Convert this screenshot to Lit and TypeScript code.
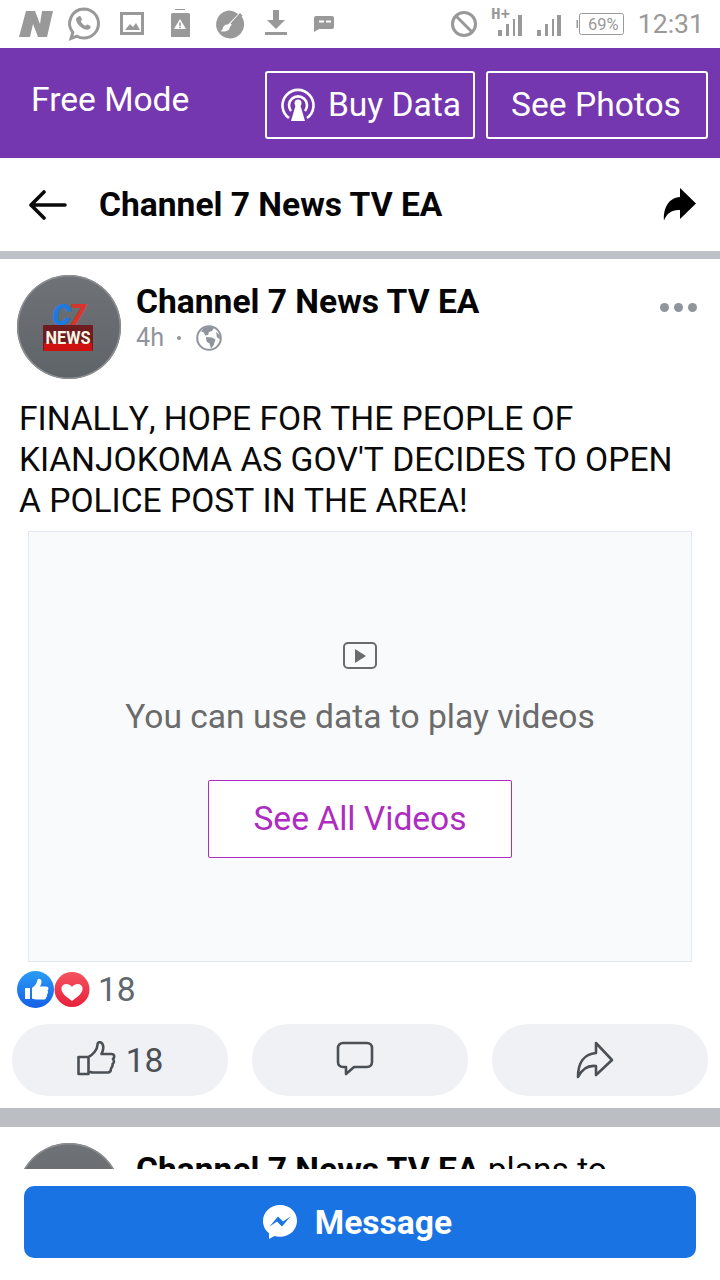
import { LitElement, html, css, svg } from "lit";
import { customElement } from "lit/decorators.js";

const G = "#999";

@customElement("app-root")
export class AppRoot extends LitElement {
  static styles = css`
    :host { display: flex; flex-direction: column; width: 720px; height: 1280px; overflow: hidden; background: #fff; font-family: Roboto, "Liberation Sans", sans-serif; color: #000; }
    svg { display: block; flex: none; }
    .status { height: 48px; flex: none; display: flex; align-items: flex-start; position: relative; }
    .clock { font-size: 26.6px; color: #999; line-height: 48px; margin-right: 16px; }
    .spacer { flex: 1; }
    .promo { height: 110px; flex: none; background: #7537b0; display: flex; align-items: center; padding: 0 12px 0 31px; color: #fff; }
    .free { font-size: 33.6px; flex: 1; margin-top: -8px; }
    .pbtn { height: 68px; box-sizing: border-box; border: 2px solid #fff; border-radius: 3px; display: flex; align-items: center; justify-content: center; font-size: 33.6px; margin-left: 11px; margin-top: 4px; padding-bottom: 2px; }
    .buy { width: 210px; gap: 13px; padding-left: 2px; }
    .buy svg { margin-top: 2px; }
    .photos { width: 222px; padding-right: 2px; }
    .head { height: 93px; flex: none; display: flex; align-items: center; padding: 0 24px 0 29px; box-sizing: border-box; }
    .head h1 { margin: 0 0 0 32px; font-size: 33.6px; font-weight: 700; flex: 1; color: #050505; }
    .rule { height: 8px; flex: none; background: #bec2c8; }
    .feed { height: 910px; flex: none; overflow: hidden; }
    .phead { display: flex; padding: 16px 23px 0 17px; height: 104px; }
    .avatar { width: 104px; height: 104px; flex: none; border-radius: 50%; background: linear-gradient(#6f7276, #5f6469); box-shadow: inset 0 0 0 1.5px #8d8f91; overflow: hidden; }
    .meta { margin-left: 15px; flex: 1; }
    .name { font-size: 33.6px; font-weight: 700; line-height: 38px; margin-top: 8px; margin-bottom: -1px; color: #050505; white-space: nowrap; }
    .name span { font-weight: 400; }
    .sub { display: flex; align-items: center; color: #90949c; font-size: 25.2px; line-height: 36px; }
    .sub i { width: 4px; height: 4px; border-radius: 50%; background: #90949c; margin: 0 15px 0 13px; }
    .more { display: flex; gap: 5px; margin-top: 28px; height: 9px; }
    .more i { width: 9px; height: 9px; border-radius: 50%; background: #90949c; }
    .text { margin: 19px 19px 0 19px; font-size: 33.6px; line-height: 41px; color: #0a0a0a; font-kerning: none; }
    .video { margin: 10px 28px 0; height: 431px; box-sizing: border-box; border: 1px solid #e3e8ee; background: #f9fafc; display: flex; flex-direction: column; align-items: center; padding-top: 110px; }
    .video p { margin: 24px 0 0; font-size: 33.6px; line-height: 46px; color: #6b6b6b; }
    .seeall { margin-top: 40px; width: 304px; height: 78px; box-sizing: border-box; border: 1px solid #b02cc0; border-radius: 2px; background: #fff; color: #ae2cc0; font-size: 33.6px; padding-bottom: 2px; display: flex; align-items: center; justify-content: center; }
    .react { display: flex; align-items: center; height: 38px; margin: 9px 0 0 17px; color: #606770; font-size: 33.6px; }
    .react span { margin-left: 8px; padding-bottom: 2px; }
    .actions { display: flex; gap: 24px; padding: 15px 12px 0; }
    .act { flex: 1; height: 72px; border-radius: 36px; background: #f0f1f5; display: flex; align-items: center; justify-content: center; gap: 9px; color: #4b4f56; font-size: 33.6px; }
    .shift { margin-right: 10px; }
    .rule2 { height: 19px; margin-top: 12px; background: #bbbec2; }
    .post2 { padding-top: 16px; }
    .bar { flex: 1; padding: 17px 24px 0; background: #fff; }
    .msg { height: 72px; border-radius: 10px; background: #1a73e3; color: #fff; font-size: 33.6px; font-weight: 700; display: flex; align-items: center; justify-content: center; gap: 17px; padding-right: 6px; }
  `;

  private statusIcons() {
    return html`<div class="status">
      <svg width="720" height="48" viewBox="0 0 720 48" style="position:absolute;left:0;top:0">
        <path fill="${G}" d="M26 11h9l5 13 2-13h11l-6 26h-9l-5-13-3 13H19z"/>
        <path fill="none" stroke="${G}" stroke-width="3" d="M84 9a14.500 14.500 0 0 1 0 29c-2.700 0-5-.6-7-1.800l-6 2.300 1.800-6A14.500 14.500 0 0 1 84 9z"/>
        <path fill="${G}" d="M78 17c1-1.500 2.500-1.500 3 0l1 2.500-1.200 2c1 2 2.500 3.300 4.500 4.300l2-1.300 2.700 1.300c1 .8.800 2.200-.3 3-2 1.600-5 1-8.300-1.300-3.500-2.500-5.500-5.700-5.400-8.500 0-.8.600-1.400 2-2z"/>
        <rect x="121.500" y="13.500" width="21" height="20" fill="none" stroke="${G}" stroke-width="3"/>
        <path fill="${G}" d="M125 30l5-6 3 3 3-4 4 7z"/>
        <path fill="${G}" fill-rule="evenodd" d="M175 9h10v1h-10zM173 13h14a3 3 0 0 1 3 1v23h-19V14a3 3 0 0 1 2-1zM180 19l-6 10h12zM179.200 22.500h1.600v3.500h-1.600zM179.200 26.700h1.600v1.500h-1.600z"/>
        <path fill="${G}" d="M228.500 10.500a14 14 0 0 1 9.500 3.700l-10 10.300c-2.500-.5-4.500 1-5 3.500-.3 1.500-1.300 2.500-2.500 3 2.500 1 6.500.8 8.500-1.500l1.500-3.500 10.800-10a14 14 0 1 1-12.800-5.500z"/>
        <path fill="${G}" d="M240 13l2.500 2.500-9.500 10.500-2.500-2.500z"/>
        <path fill="${G}" d="M273 10h6v10h6l-9 9-9-9h6zM265 32h22v3h-22z"/>
        <path fill="${G}" fill-rule="evenodd" d="M316 16h16a2 2 0 0 1 2 2v9a2 2 0 0 1-2 2h-13l-5 3V18a2 2 0 0 1 2-2zM319 20.500v2h5v-2zM326 20.500v2h5v-2z"/>
        <circle cx="464" cy="24" r="11.500" fill="none" stroke="${G}" stroke-width="3"/>
        <path stroke="${G}" stroke-width="3" d="M456 16l16 16"/>
        <text x="491" y="19" font-family="Liberation Mono, monospace" font-size="16" font-weight="700" fill="${G}">H+</text>
        <path fill="${G}" d="M498 30h4v6h-4zM506 24h3v12h-3zM513 19h2v17h-2zM518 15h4v21h-4z"/>
        <path fill="${G}" d="M537 30h4v6h-4zM545 24h3v12h-3zM552 19h2v17h-2zM557 15h4v21h-4z"/>
        <rect x="579.500" y="13.500" width="44" height="21" rx="2" fill="none" stroke="${G}"/>
        <rect x="576.500" y="20" width="1.500" height="8" fill="${G}"/>
        <text x="588" y="30" font-family="Roboto, sans-serif" font-size="16.500" fill="${G}">69%</text>
      </svg>
      <div class="spacer"></div>
      <div class="clock">12:31</div>
    </div>`;
  }

  private avatar() {
    return html`<div class="avatar"><svg width="104" height="104" viewBox="0 0 104 104">
      <text x="35" y="50" font-family="Roboto, sans-serif" font-size="30" font-weight="900" font-style="italic" fill="#1d78e0">C</text>
      <text x="52" y="50" font-family="Roboto, sans-serif" font-size="30" font-weight="900" font-style="italic" fill="#d9342b">7</text>
      <rect x="26" y="50" width="50" height="26" rx="1" fill="#6e1c20"/>
      <rect x="27" y="68" width="48" height="8" fill="#cf1111"/>
      <text x="51" y="69" text-anchor="middle" font-family="Roboto, sans-serif" font-size="18.500" font-weight="700" fill="#fff6e6" textLength="45" lengthAdjust="spacingAndGlyphs">NEWS</text>
    </svg></div>`;
  }

  render() {
    const thumb = svg`<path fill="none" stroke="#4b4f56" stroke-width="2.600" stroke-linejoin="round" d="M1.500 16h10v17h-10zM11.500 16c4-2 9-7 9-12.500 0-3 3.500-3 5-.5 1.500 3 .5 7-1 10h10c3 0 3.500 3 1.500 5 1.500 2 1 4-.5 5 .5 2.500-.5 3.500-1.500 4.500 0 2-1 4-3.500 4H16c-2 0-3-1-4.500-1"/>`;
    return html`
      ${this.statusIcons()}
      <div class="promo">
        <div class="free">Free Mode</div>
        <div class="pbtn buy">
          <svg width="34" height="34" viewBox="0 0 34 34">
            <path fill="none" stroke="#fff" stroke-width="2.600" d="M8 30a15.500 15.500 0 1 1 18 0"/>
            <path fill="none" stroke="#fff" stroke-width="2.600" d="M10 23a9 9 0 1 1 14 0"/>
            <circle cx="17" cy="15" r="3.500" fill="#fff"/>
            <path fill="#fff" d="M15 16h4l5 17H10z"/>
          </svg>
          <span>Buy Data</span>
        </div>
        <div class="pbtn photos">See Photos</div>
      </div>
      <div class="head">
        <svg width="38" height="30" viewBox="0 0 38 30"><path fill="none" stroke="#0a0a0a" stroke-width="3.600" stroke-linecap="round" stroke-linejoin="round" d="M36 15H3M15 2L2 15l13 13"/></svg>
        <h1>Channel 7 News TV EA</h1>
        <svg width="33" height="33" viewBox="0 0 33 33"><path fill="#000" d="M17 0l16 15.500L17 31V22C9 21.500 4 25 1 32.500 0 20 6 9.500 17 9z"/></svg>
      </div>
      <div class="rule"></div>
      <div class="feed">
        <div class="phead">
          ${this.avatar()}
          <div class="meta">
            <div class="name">Channel 7 News TV EA</div>
            <div class="sub">4h<i></i>
              <svg width="26" height="26" viewBox="0 0 26 26">
                <circle cx="13" cy="13" r="11.800" fill="none" stroke="#90949c" stroke-width="2"/>
                <path fill="#90949c" d="M8 3c3-1.500 8-1.500 10 0l-2 3-3 1-1 3-3 .5-1-3-3-1zM10 12l6 .5 3.500 2-2 6-2.500 3-1.500-5-3-2zM20 7l3.500 3 .5 4-3-1.500z"/>
              </svg>
            </div>
          </div>
          <div class="more"><i></i><i></i><i></i></div>
        </div>
        <div class="text">FINALLY, HOPE FOR THE PEOPLE OF KIANJOKOMA AS GOV'T DECIDES TO OPEN A POLICE POST IN THE AREA!</div>
        <div class="video">
          <svg width="34" height="28" viewBox="0 0 34 28"><rect x="1" y="1" width="32" height="25" rx="4" fill="none" stroke="#6b6b6b" stroke-width="2"/><path fill="#6b6b6b" d="M12 7l11 7-11 7z"/></svg>
          <p>You can use data to play videos</p>
          <div class="seeall">See All Videos</div>
        </div>
        <div class="react">
          <svg width="73" height="38" viewBox="0 0 73 38">
            <defs>
              <linearGradient id="b" x1="0" y1="0" x2="0" y2="1"><stop offset="0" stop-color="#2a9cf5"/><stop offset="1" stop-color="#1560e8"/></linearGradient>
              <linearGradient id="r" x1="0" y1="0" x2="0" y2="1"><stop offset="0" stop-color="#f5535f"/><stop offset="1" stop-color="#e8213a"/></linearGradient>
            </defs>
            <circle cx="55" cy="18.500" r="17.500" fill="url(#r)"/>
            <path fill="#fff" d="M55 30c-6-4.500-11-8-10.500-13 .5-4.500 7-5.500 10.500-1 3.500-4.500 10-3.500 10.500 1 .5 5-4.500 8.500-10.500 13z"/>
            <circle cx="18.500" cy="18.500" r="18.500" fill="url(#b)"/>
            <path fill="#fff" d="M8 17h5v11H8zM15 17c3-2 5-5 5.500-8 .5-2 4-1.500 4 1.500 0 2-1 4-1.500 5h6c3 0 3 3 1.500 4 1 1.500.5 3-.5 3.500.5 1.500 0 3-1 3.500 0 1.500-1 2-2.500 2H19c-2 0-3-1-4-1z"/>
          </svg>
          <span>18</span>
        </div>
        <div class="actions">
          <div class="act"><svg width="40" height="38" viewBox="0 0 40 38">${thumb}</svg><span>18</span></div>
          <div class="act"><svg class="shift" width="38" height="38" viewBox="0 0 38 38"><path fill="none" stroke="#4b4f56" stroke-width="2.600" stroke-linejoin="round" d="M7 2h24c3 0 5 2 5 5v14c0 3-2 5-5 5H18l-8 7v-7H7c-3 0-5-2-5-5V7c0-3 2-5 5-5z"/></svg></div>
          <div class="act"><svg class="shift" width="38" height="38" viewBox="0 0 38 38"><path fill="none" stroke="#4b4f56" stroke-width="2.600" stroke-linejoin="round" d="M20 2l16 17-16 15v-9C12 24 6 28 2 36c0-14 6-23 18-24z"/></svg></div>
        </div>
        <div class="rule2"></div>
        <div class="post2">
          <div class="phead" style="padding-top:0">
            ${this.avatar()}
            <div class="meta"><div class="name">Channel 7 News TV EA <span>plans to</span></div></div>
          </div>
        </div>
      </div>
      <div class="bar">
        <div class="msg">
          <svg width="36" height="36" viewBox="0 0 36 36">
            <path fill="#fff" d="M18 1C8.500 1 1 8 1 17c0 5 2.300 9.300 6 12.200V35l5.500-3c1.700.5 3.500.7 5.500.7 9.500 0 17-7 17-16S27.500 1 18 1z"/>
            <path fill="#1a73e3" d="M7.500 22.500l8.500-10 5 5 7.500-5-8.500 10-5-5z"/>
          </svg>
          <span>Message</span>
        </div>
      </div>
    `;
  }
}
